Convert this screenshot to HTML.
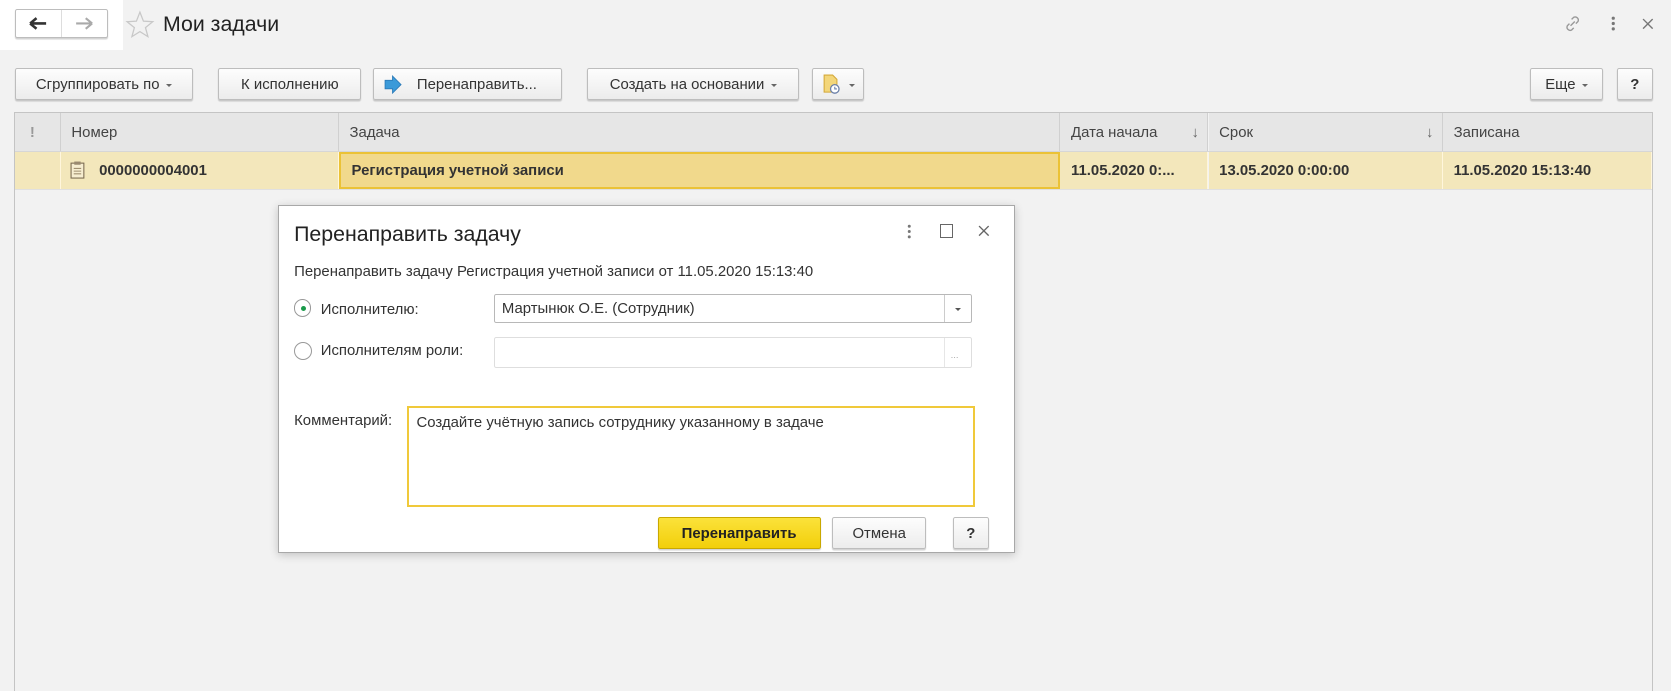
<!DOCTYPE html>
<html><head><meta charset="utf-8"><style>
html,body{margin:0;padding:0;width:1671px;height:691px;overflow:hidden;background:#f2f2f2}
#w{position:absolute;left:0;top:0;width:1568px;height:648px;overflow:hidden;zoom:1.0657;font-family:"Liberation Sans",Arial,sans-serif;font-size:14px;color:#333;background:#f2f2f2}
.a{position:absolute}
.btn{position:absolute;height:29px;box-sizing:border-box;border:1px solid #bdbdbd;border-radius:2px;background:linear-gradient(#fdfdfd,#ececec);box-shadow:0 1px 1px rgba(0,0,0,.18);line-height:31px;text-align:center;color:#333;font-size:14px;white-space:nowrap}
.dd{display:inline-block;width:0;height:0;border-left:3px solid transparent;border-right:3px solid transparent;border-top:3px solid #666;vertical-align:middle;margin-left:6px}
.hd{position:absolute;top:106px;height:36px;line-height:38px;background:#e6e6e6;border-right:1px solid #d0d0d0;box-sizing:border-box;padding-left:10px;color:#444}
.cl{position:absolute;top:143px;height:34px;line-height:36px;background:#f3e7bb;border-right:1px solid #fff6dc;box-sizing:border-box;padding-left:10px;font-weight:bold;color:#333}
</style></head><body><div id="w">
<div class="a" style="left:0;top:0;width:115px;height:47px;background:#fff"></div>
<div class="btn" style="left:14px;top:8px;width:87px;height:28px;background:#fff"></div>
<div class="a" style="left:57px;top:9px;width:1px;height:26px;background:#ddd"></div>
<svg class="a" style="left:26px;top:15px" width="20" height="14"><path d="M2 7H17M2 7L8 2M2 7L8 12" stroke="#333" stroke-width="2.4" fill="none"/></svg>
<svg class="a" style="left:69px;top:15px" width="20" height="14"><path d="M2 7H17M17 7L11 2M17 7L11 12" stroke="#aaa" stroke-width="2" fill="none"/></svg>
<svg class="a" style="left:117px;top:9px" width="28" height="28"><path d="M14 2L17.3 10.5 26 11 19.2 16.5 21.5 25 14 20.3 6.5 25 8.8 16.5 2 11 10.7 10.5Z" fill="none" stroke="#c8c8c8" stroke-width="1.2"/></svg>
<div class="a" style="left:153px;top:11px;font-size:20px;color:#222">Мои задачи</div>
<svg class="a" style="left:1466px;top:12px" width="20" height="20"><path d="M8 12L12 8M9 6l2-2a3 3 0 014 4l-2 2M11 14l-2 2a3 3 0 01-4-4l2-2" stroke="#999" stroke-width="1.3" fill="none"/></svg>
<svg class="a" style="left:1510px;top:14px" width="8" height="16"><circle cx="4" cy="3" r="1.5" fill="#777"/><circle cx="4" cy="8" r="1.5" fill="#777"/><circle cx="4" cy="13" r="1.5" fill="#777"/></svg>
<svg class="a" style="left:1541px;top:17px" width="11" height="11"><path d="M1 1L10 10M10 1L1 10" stroke="#777" stroke-width="1.3"/></svg>

<div class="btn" style="left:14px;top:64px;width:167px;height:30px">Сгруппировать по<span class="dd"></span></div>
<div class="btn" style="left:205px;top:64px;width:134px;height:30px">К исполнению</div>
<div class="btn" style="left:350px;top:64px;width:177px;height:30px;padding-left:18px">Перенаправить...</div>
<svg class="a" style="left:360px;top:70px" width="18" height="18"><path d="M1 5H8V1L16 9 8 17V13H1Z" fill="#3b9ad9" stroke="#2a7ab8" stroke-width=".8"/></svg>
<div class="btn" style="left:551px;top:64px;width:199px;height:30px">Создать на основании<span class="dd"></span></div>
<div class="btn" style="left:762px;top:64px;width:49px;height:30px;padding-left:20px"><span class="dd"></span></div>
<svg class="a" style="left:771px;top:69px" width="18" height="20"><path d="M2 1H10L14 5V17H2Z" fill="#f3d67a" stroke="#d4a93a"/><circle cx="12" cy="14" r="4" fill="#fff" stroke="#6a7fa8" stroke-width="1.2"/><path d="M12 12V14H14" stroke="#6a7fa8" fill="none"/></svg>
<div class="btn" style="left:1436px;top:64px;width:68px;height:30px">Еще<span class="dd"></span></div>
<div class="btn" style="left:1517px;top:64px;width:34px;height:30px;font-weight:bold">?</div>

<div class="a" style="left:13px;top:105px;width:1538px;height:560px;border:1px solid #c4c4c4;box-sizing:border-box;background:#f2f2f2"></div>
<div class="hd" style="left:14px;width:43px;padding-left:14px;color:#999;font-weight:bold">!</div>
<div class="hd" style="left:57px;width:261px">Номер</div>
<div class="hd" style="left:318px;width:677px">Задача</div>
<div class="hd" style="left:995px;width:139px">Дата начала<span class="a" style="right:8px;top:0;color:#666">↓</span></div>
<div class="hd" style="left:1134px;width:220px">Срок<span class="a" style="right:8px;top:0;color:#666">↓</span></div>
<div class="hd" style="left:1354px;width:196px;border-right:0">Записана</div>
<div class="a" style="left:14px;top:142px;width:1536px;height:1px;background:#d6d6d6"></div>
<div class="cl" style="left:14px;width:43px"></div>
<div class="cl" style="left:57px;width:261px;padding-left:36px">0000000004001</div>
<svg class="a" style="left:66px;top:151px" width="14" height="17"><rect x="1" y="2" width="12" height="14" fill="#f6edd0" stroke="#7a6a50"/><rect x="4" y="0.5" width="6" height="3" fill="#9a8a70"/><path d="M3.5 7h7M3.5 9.5h7M3.5 12h7" stroke="#a09070"/></svg>
<div class="cl" style="left:318px;width:677px;background:#f1d98c;border:2px solid #ebc236;line-height:32px;padding-left:10px">Регистрация учетной записи</div>
<div class="cl" style="left:995px;width:139px">11.05.2020 0:...</div>
<div class="cl" style="left:1134px;width:220px">13.05.2020 0:00:00</div>
<div class="cl" style="left:1354px;width:196px">11.05.2020 15:13:40</div>
<div class="a" style="left:14px;top:177px;width:1536px;height:1px;background:#e0e0e0"></div>

<div class="a" style="left:261px;top:192px;width:691px;height:327px;background:#fff;border:1px solid #a8a8a8;box-sizing:border-box;box-shadow:0 2px 8px rgba(0,0,0,.2)"></div>
<div class="a" style="left:276px;top:208px;font-size:20px;color:#222">Перенаправить задачу</div>
<svg class="a" style="left:849px;top:209px" width="8" height="16"><circle cx="4" cy="3" r="1.4" fill="#777"/><circle cx="4" cy="8" r="1.4" fill="#777"/><circle cx="4" cy="13" r="1.4" fill="#777"/></svg>
<div class="a" style="left:882px;top:210px;width:10px;height:11px;border:1px solid #666"></div>
<svg class="a" style="left:918px;top:211px" width="11" height="11"><path d="M1 1L10 10M10 1L1 10" stroke="#666" stroke-width="1.3"/></svg>
<div class="a" style="left:276px;top:248px;color:#333">Перенаправить задачу Регистрация учетной записи от 11.05.2020 15:13:40</div>
<div class="a" style="left:276px;top:281px;width:16px;height:16px;border:1px solid #999;border-radius:50%;box-sizing:border-box"></div>
<div class="a" style="left:282px;top:287px;width:5px;height:5px;border-radius:50%;background:#1a9a4a"></div>
<div class="a" style="left:301px;top:283px">Исполнителю:</div>
<div class="a" style="left:464px;top:276px;width:448px;height:27px;border:1px solid #b8b8b8;border-radius:2px;box-sizing:border-box;padding-left:6px;line-height:28px">Мартынюк О.Е. (Сотрудник)</div>
<div class="a" style="left:886px;top:277px;width:1px;height:25px;background:#ccc"></div>
<div class="a" style="left:896px;top:289px;border-left:3px solid transparent;border-right:3px solid transparent;border-top:3px solid #555"></div>
<div class="a" style="left:276px;top:321px;width:17px;height:17px;border:1px solid #999;border-radius:50%;box-sizing:border-box"></div>
<div class="a" style="left:301px;top:322px">Исполнителям роли:</div>
<div class="a" style="left:464px;top:316px;width:448px;height:29px;border:1px solid #dedede;border-radius:2px;box-sizing:border-box"></div>
<div class="a" style="left:886px;top:317px;width:1px;height:27px;background:#e6e6e6"></div>
<div class="a" style="left:892px;top:328px;font-size:9px;color:#aaa">...</div>
<div class="a" style="left:276px;top:388px">Комментарий:</div>
<div class="a" style="left:382px;top:381px;width:533px;height:95px;border:2px solid #f0c93a;box-sizing:border-box;padding:7px 7px">Создайте учётную запись сотруднику указанному в задаче</div>
<div class="btn" style="left:617px;top:485px;width:153px;height:30px;background:linear-gradient(#fbe23a,#f2cf0a);border-color:#c9a800;font-weight:bold;color:#222">Перенаправить</div>
<div class="btn" style="left:781px;top:485px;width:88px;height:30px">Отмена</div>
<div class="btn" style="left:894px;top:485px;width:34px;height:30px;font-weight:bold">?</div>
</div></body></html>
